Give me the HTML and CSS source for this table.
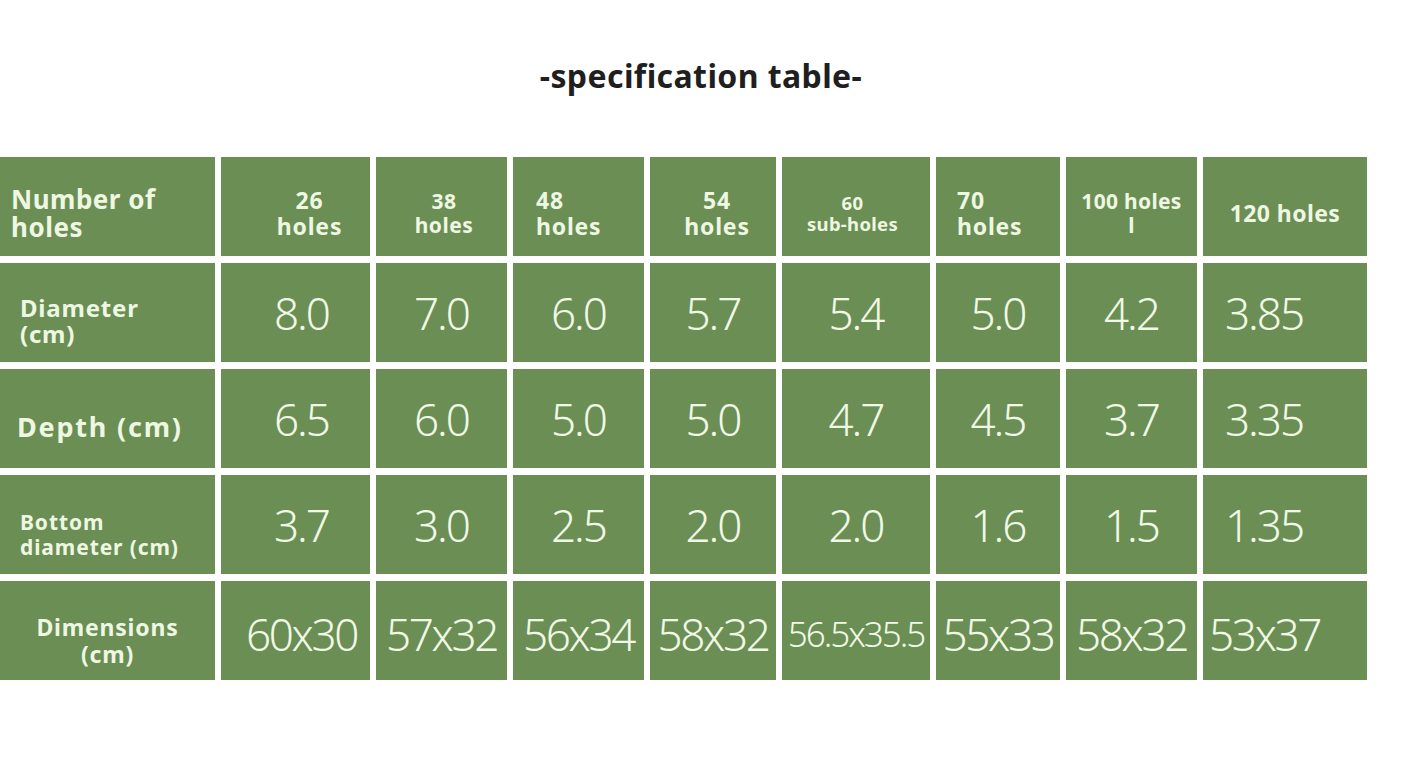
FILE: index.html
```html
<!DOCTYPE html>
<html>
<head>
<meta charset="utf-8">
<link rel="stylesheet" href="styles.css">
</head>
<body>
<div class="page">
  <h1 class="title">-specification table-</h1>
  <div class="table">
    <div class="cell head label-left row-head"><span class="t-number">Number of<br>holes</span></div>
    <div class="cell head row-head nudge-28"><span class="h23">26<br>holes</span></div>
    <div class="cell head row-head nudge-5"><span class="h21">38<br>holes</span></div>
    <div class="cell head row-head left-48"><span class="h23">48<br>holes</span></div>
    <div class="cell head row-head nudge-8"><span class="h23">54<br>holes</span></div>
    <div class="cell head row-head nudge-back-7"><span class="h18">60<br>sub-holes</span></div>
    <div class="cell head row-head left-70"><span class="h23">70<br>holes</span></div>
    <div class="cell head row-head"><span class="h21 tight">100 holes<br>l</span></div>
    <div class="cell head row-head"><span class="h23b">120 holes</span></div>

    <div class="cell head label-left pad20 shift16"><span class="t-diam">Diameter<br>(cm)</span></div>
    <div class="cell val sh-r">8.0</div>
    <div class="cell val">7.0</div>
    <div class="cell val">6.0</div>
    <div class="cell val">5.7</div>
    <div class="cell val">5.4</div>
    <div class="cell val">5.0</div>
    <div class="cell val">4.2</div>
    <div class="cell val sh-l">3.85</div>

    <div class="cell head label-left pad17 shift16"><span class="t-depth">Depth (cm)</span></div>
    <div class="cell val sh-r">6.5</div>
    <div class="cell val">6.0</div>
    <div class="cell val">5.0</div>
    <div class="cell val">5.0</div>
    <div class="cell val">4.7</div>
    <div class="cell val">4.5</div>
    <div class="cell val">3.7</div>
    <div class="cell val sh-l">3.35</div>

    <div class="cell head label-left pad20 shift20"><span class="t-bottom">Bottom<br>diameter (cm)</span></div>
    <div class="cell val sh-r">3.7</div>
    <div class="cell val">3.0</div>
    <div class="cell val">2.5</div>
    <div class="cell val">2.0</div>
    <div class="cell val">2.0</div>
    <div class="cell val">1.6</div>
    <div class="cell val">1.5</div>
    <div class="cell val sh-l">1.35</div>

    <div class="cell head shift20"><span class="t-dim">Dimensions<br>(cm)</span></div>
    <div class="cell val dim sh-r">60x30</div>
    <div class="cell val dim">57x32</div>
    <div class="cell val dim">56x34</div>
    <div class="cell val dim">58x32</div>
    <div class="cell val dim small">56.5x35.5</div>
    <div class="cell val dim">55x33</div>
    <div class="cell val dim">58x32</div>
    <div class="cell val dim sh-l">53x37</div>
  </div>
</div>
</body>
</html>
```
FILE: styles.css
```css
html, body {
  margin: 0;
  padding: 0;
  background: #ffffff;
}

.page {
  width: 1402px;
  height: 770px;
  overflow: hidden;
  font-family: "Noto Sans", "Open Sans", sans-serif;
}

.title {
  margin: 56px 0 0 0;
  height: 40px;
  line-height: 40px;
  font-size: 32px;
  font-weight: 700;
  color: #1f1f1f;
  text-align: center;
  letter-spacing: 0.4px;
}

.table {
  margin-top: 61px;
  display: grid;
  grid-template-columns: 215px 149px 131px 131px 126px 148px 124px 131px 164px;
  grid-template-rows: repeat(5, 99px);
  column-gap: 6px;
  row-gap: 7px;
  width: 1367px;
}

.cell {
  background: #6a8e54;
  color: #eef7e2;
  display: flex;
  align-items: center;
  justify-content: center;
  text-align: center;
  box-sizing: border-box;
}

.head {
  font-weight: 700;
}

.head span {
  display: block;
}

.row-head { padding-top: 12px; }
.shift16 { padding-top: 16px; }
.shift20 { padding-top: 20px; }

.nudge-28 { padding-left: 28px; }
.nudge-5 { padding-left: 5px; }
.nudge-8 { padding-left: 8px; }
.nudge-back-7 { padding-right: 7px; }

.label-left {
  justify-content: flex-start;
  text-align: left;
  padding-left: 11px;
}

.pad20 { padding-left: 20px; }
.pad17 { padding-left: 17px; }

.left-48 {
  justify-content: flex-start;
  text-align: left;
  padding-left: 23px;
}

.left-70 {
  justify-content: flex-start;
  text-align: left;
  padding-left: 21px;
}

.t-number { font-size: 26px; line-height: 28px; letter-spacing: 0.5px; }
.t-diam { font-size: 24px; line-height: 26px; letter-spacing: 0.8px; }
.t-depth { font-size: 27px; line-height: 32px; letter-spacing: 1.8px; }
.t-bottom { font-size: 21px; line-height: 25px; letter-spacing: 0.9px; }
.t-dim { font-size: 23px; line-height: 27px; letter-spacing: 0.8px; }

.h23 { font-size: 23px; line-height: 26px; letter-spacing: 0.8px; }
.h23b { font-size: 23px; line-height: 26px; letter-spacing: 0.4px; }
.h21 { font-size: 21px; line-height: 24px; letter-spacing: 0.5px; }
.h18 { font-size: 18.5px; line-height: 21px; letter-spacing: 0.3px; }
.tight { letter-spacing: 0.3px; }

.val {
  font-size: 44px;
  font-weight: 350;
  letter-spacing: -2px;
  color: #f0f8e6;
}

.dim {
  font-size: 44px;
  letter-spacing: -2.3px;
  padding-top: 6px;
}

.dim.small {
  font-size: 35px;
  letter-spacing: -2px;
}

.sh-r { padding-left: 12px; }
.sh-l { justify-content: flex-start; padding-left: 22px; }
.dim.sh-l { padding-left: 6px; }
```
